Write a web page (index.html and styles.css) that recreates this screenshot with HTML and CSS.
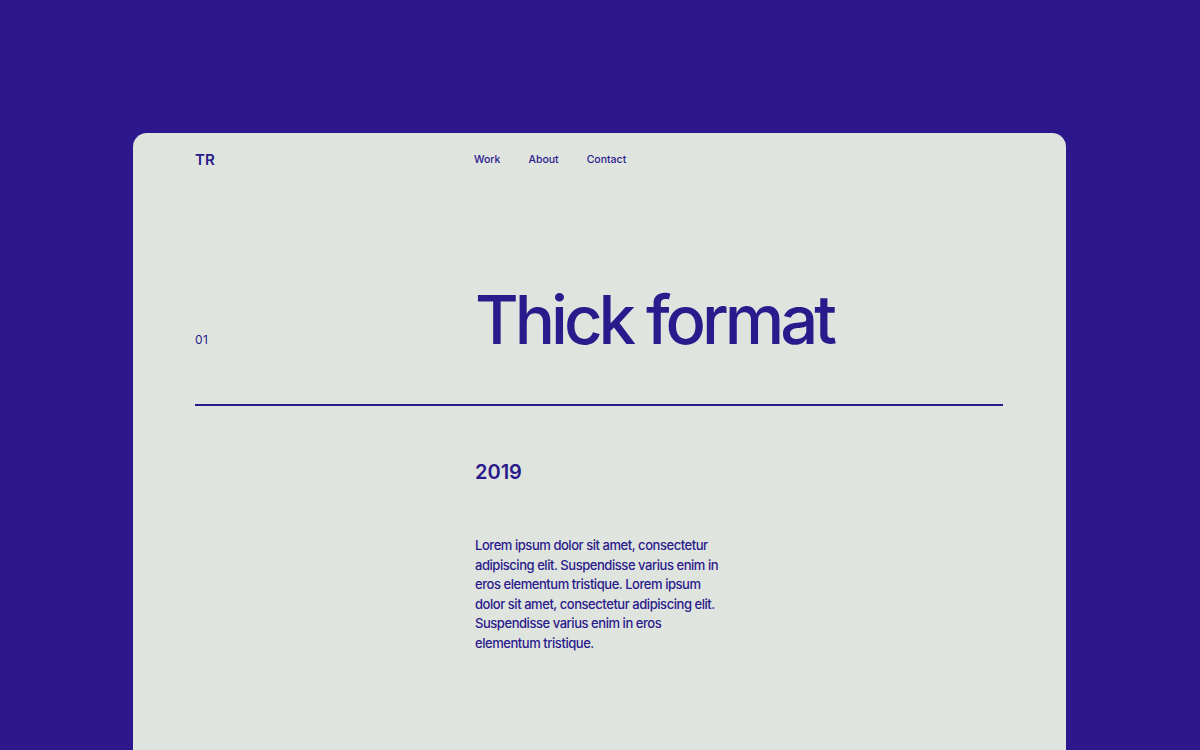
FILE: index.html
```html
<!DOCTYPE html>
<html lang="en">
<head>
<meta charset="utf-8">
<title>Thick format</title>
<link rel="stylesheet" href="styles.css">
</head>
<body>
<div class="page">
  <main class="card">
    <header class="header">
      <div class="logo">TR</div>
      <nav class="nav">
        <a href="#">Work</a>
        <a href="#">About</a>
        <a href="#">Contact</a>
      </nav>
    </header>
    <section class="hero">
      <div class="num">01</div>
      <h1 class="title">Thick format</h1>
    </section>
    <hr class="rule">
    <section class="details">
      <div></div>
      <div class="content">
        <h2 class="year">2019</h2>
        <p class="text">Lorem ipsum dolor sit amet, consectetur adipiscing elit. Suspendisse varius enim in eros elementum tristique. Lorem ipsum dolor sit amet, consectetur adipiscing elit. Suspendisse varius enim in eros elementum tristique.</p>
      </div>
    </section>
  </main>
</div>
</body>
</html>
```

FILE: styles.css
```css
html, body {
  margin: 0;
  padding: 0;
  height: 100%;
  overflow: hidden;
}
body {
  background: #2c178c;
  font-family: Inter, "Liberation Sans", sans-serif;
  color: #2a1a8c;
}
.page {
  padding: 133px 134px 0 133px;
}
.card {
  background: #dfe4de;
  border-radius: 14px 14px 0 0;
  padding: 0 63px 0 62px;
  min-height: 700px;
}
.header {
  display: grid;
  grid-template-columns: 279px 1fr;
  align-items: center;
  height: 52px;
}
.logo {
  font-size: 15px;
  font-weight: 600;
  letter-spacing: 0.2px;
}
.nav {
  display: flex;
  gap: 28px;
}
.nav a {
  color: #2a1a8c;
  text-decoration: none;
  font-size: 10.5px;
  font-weight: 500;
}
.hero {
  display: grid;
  grid-template-columns: 280px 1fr;
  align-items: baseline;
  padding-top: 95px;
}
.num {
  font-size: 12px;
  letter-spacing: 0.5px;
}
.title {
  margin: 0;
  font-size: 67px;
  font-weight: 500;
  letter-spacing: -4px;
  line-height: 80px;
}
.rule {
  margin: 44px 0 0 0;
  border: 0;
  border-top: 2px solid #2a1a8c;
  height: 0;
}
.details {
  display: grid;
  grid-template-columns: 280px 1fr;
  padding-top: 52px;
}
.year {
  margin: 0;
  font-size: 20px;
  font-weight: 600;
  line-height: 28px;
}
.text {
  margin: 50px 0 0 0;
  width: 250px;
  font-size: 13px;
  line-height: 19.5px;
  font-weight: 500;
  letter-spacing: -0.45px;
}
```
